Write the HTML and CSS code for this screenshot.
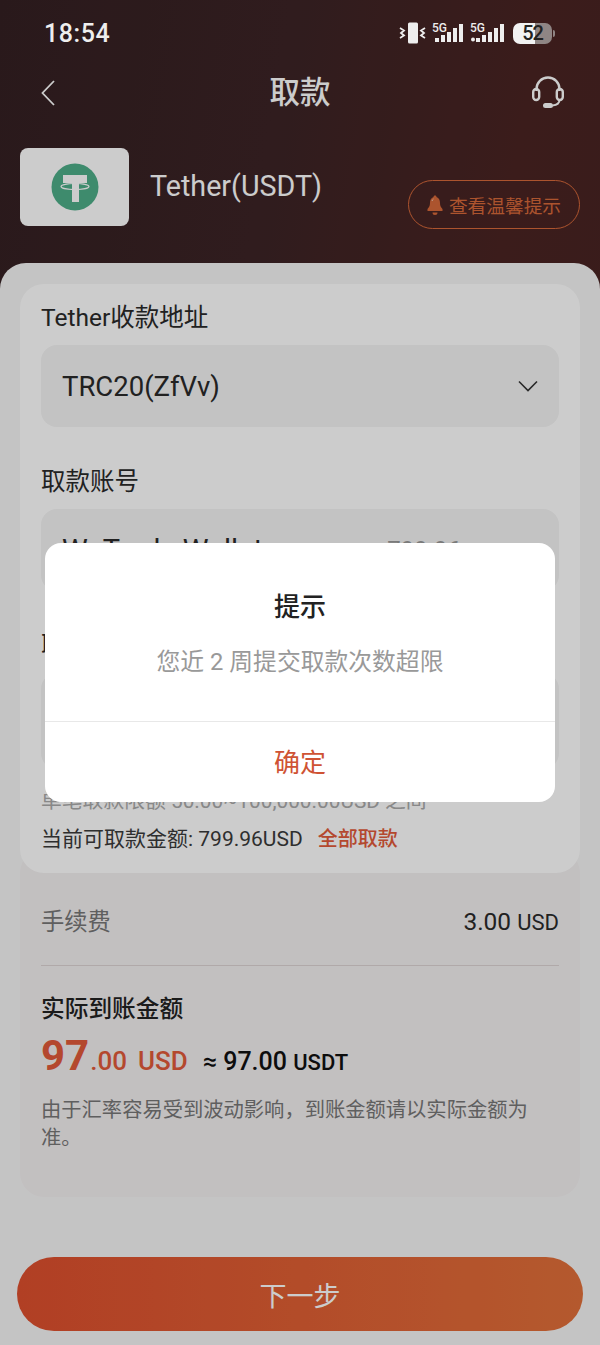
FILE: index.html
```html
<!DOCTYPE html>
<html lang="zh">
<head>
<meta charset="utf-8">
<title>取款</title>
<link rel="stylesheet" href="styles.css">
</head>
<body>
<div class="page">
  <div class="status">
    <span class="time">18:54</span>
    <div class="status-icons">
      <svg class="ic-vibrate" width="29" height="22" viewBox="0 0 29 22">
        <rect x="10" y="0.500" width="10" height="21" rx="1.500" fill="#eee"/>
        <path d="M2 6l4 2.500-3 2.500 3 2.500-4 2.500M27 6l-4 2.500 3 2.500-3 2.500 4 2.500" fill="none" stroke="#eee" stroke-width="1.800"/>
      </svg>
      <svg class="ic-signal" width="32" height="22" viewBox="0 0 32 22">
        <text x="0" y="9.500" class="five-g">5G</text>
        <rect x="3" y="16" width="4" height="4" fill="#eee"/>
        <rect x="9" y="13" width="4" height="7" fill="#eee"/>
        <rect x="15" y="10" width="4" height="10" fill="#eee"/>
        <rect x="21" y="6" width="4" height="14" fill="#eee"/>
        <rect x="27" y="2" width="4" height="18" fill="#eee"/>
      </svg>
      <svg class="ic-signal ic-signal-two" width="35" height="22" viewBox="0 0 35 22">
        <text x="0" y="9.500" class="five-g">5G</text>
        <circle cx="3" cy="17.500" r="2" fill="#eee"/>
        <rect x="6" y="16" width="4" height="4" fill="#eee"/>
        <rect x="12" y="13" width="4" height="7" fill="#eee"/>
        <rect x="18" y="10" width="4" height="10" fill="#eee"/>
        <rect x="24" y="6" width="4" height="14" fill="#eee"/>
        <rect x="30" y="2" width="4" height="18" fill="#eee"/>
      </svg>
      <div class="battery">
        <span class="battery-level">52</span>
      </div>
      <span class="battery-tip"></span>
    </div>
  </div>

  <div class="nav">
    <svg class="back" width="14" height="26" viewBox="0 0 14 26">
      <path d="M13 1L1.500 13 13 25" fill="none" stroke="#fff" stroke-width="1.800"/>
    </svg>
    <h1 class="nav-title">取款</h1>
    <svg class="headset" width="34" height="34" viewBox="0 0 34 34">
      <path d="M5.500 15V13a11.500 11.500 0 0 1 23 0v2" fill="none" stroke="#fff" stroke-width="2.400"/>
      <rect x="2.200" y="13" width="6" height="11" rx="3" fill="none" stroke="#fff" stroke-width="2.400"/>
      <rect x="25.800" y="13" width="6" height="11" rx="3" fill="none" stroke="#fff" stroke-width="2.400"/>
      <path d="M28.500 24c0 3-3 5-7 5.500" fill="none" stroke="#fff" stroke-width="2"/>
      <rect x="12" y="27" width="10" height="5" rx="2.500" fill="#fff"/>
    </svg>
  </div>

  <div class="coin">
    <div class="coin-tile">
      <svg width="48" height="48" viewBox="0 0 48 48">
        <circle cx="24" cy="24" r="23.500" fill="#4eae89"/>
        <path d="M12 12h24v8h-8v19h-7V20h-9z" fill="#fff"/>
        <ellipse cx="24" cy="23.500" rx="14" ry="3" fill="none" stroke="#fff" stroke-width="1.100"/>
      </svg>
    </div>
    <span class="coin-name">Tether(USDT)</span>
    <div class="tips">
      <svg class="bell" width="16" height="20" viewBox="0 0 16 20">
        <path d="M8 0.500c1 0 1.500 .7 1.500 1.500 2.500 1 3.500 3 3.500 6 0 3 1 4.500 2.500 6v2H0.500v-2C2 12.500 3 11 3 8c0-3 1-5 3.500-6C6.500 1.200 7 .5 8 .5zM5.500 17.500h5a2.500 2.500 0 0 1-5 0z" fill="#d8693a"/>
        <path d="M5 6c.3-1 .8-1.500 1.500-2" fill="none" stroke="#f5c9b0" stroke-width="1"/>
      </svg>
      <span>查看温馨提示</span>
    </div>
  </div>

  <div class="sheet">
    <div class="card-form">
      <div class="label">Tether收款地址</div>
      <div class="field">
        <span class="field-text">TRC20(ZfVv)</span>
        <svg class="chevron" width="20" height="12" viewBox="0 0 20 12">
          <path d="M1 1.500l9 9 9-9" fill="none" stroke="#333" stroke-width="1.600"/>
        </svg>
      </div>
      <div class="label label-next">取款账号</div>
      <div class="field">
        <span class="field-text field-wallet">WeTrade Wallet</span>
        <span class="field-side">799.96 <small>USD</small></span>
      </div>
      <div class="label label-next">取款金额</div>
      <div class="field field-tall">
        <span class="field-text">100.00</span>
      </div>
      <div class="hint">单笔取款限额 50.00~100,000.00USD 之间</div>
      <div class="avail">当前可取款金额: 799.96USD<a class="all">全部取款</a></div>
    </div>

    <div class="card-summary">
      <div class="fee">
        <span class="fee-label">手续费</span>
        <span class="fee-value">3.00 <small>USD</small></span>
      </div>
      <div class="rule"></div>
      <div class="net-title">实际到账金额</div>
      <div class="net">
        <span class="net-int">97</span><span class="net-dec">.00</span><span class="net-cur">USD</span>
        <span class="net-approx">≈ 97.00 <small>USDT</small></span>
      </div>
      <p class="note">由于汇率容易受到波动影响，到账金额请以实际金额为准。</p>
    </div>

    <button class="next">下一步</button>
  </div>

  <div class="overlay">
    <div class="dialog">
      <div class="dialog-body">
        <div class="dialog-title">提示</div>
        <div class="dialog-msg">您近 2 周提交取款次数超限</div>
      </div>
      <div class="dialog-ok">确定</div>
    </div>
  </div>
</div>
</body>
</html>
```

FILE: styles.css
```css
* { box-sizing: border-box; }
html, body { margin: 0; padding: 0; }
body {
  font-family: Roboto, "Noto Sans CJK SC", sans-serif;
  color: #222;
}
.page {
  position: relative;
  width: 600px;
  height: 1345px;
  overflow: hidden;
  background: linear-gradient(100deg, #342022 0%, #3c2326 35%, #4a2422 65%, #462223 100%);
}

/* status bar */
.status {
  position: relative;
  z-index: 30;
  height: 66px;
  padding: 0 45px 0 44px;
  display: flex;
  align-items: center;
  justify-content: space-between;
  color: #eee;
}
.time { font-size: 25px; font-weight: 500; letter-spacing: .6px; }
.status-icons { display: flex; align-items: center; }
.ic-vibrate { margin-right: 5px; }
.ic-signal-two { margin-left: 6px; }
.five-g { font: 500 12px Roboto, sans-serif; fill: #eee; }
.battery {
  width: 39px;
  height: 21px;
  margin-left: 8px;
  border-radius: 7px;
  background: linear-gradient(90deg, #f2f2f2 0 56%, #8f8584 56% 100%);
  display: flex;
  align-items: center;
  justify-content: center;
}
.battery-level { font-size: 20px; font-weight: 500; color: #222; line-height: 21px; letter-spacing: -1px; }
.battery-tip { width: 2px; height: 7px; margin-left: 1px; background: #8f8584; border-radius: 0 2px 2px 0; }

/* nav */
.nav {
  height: 54px;
  padding: 0 35px;
  display: grid;
  grid-template-columns: 1fr auto 1fr;
  align-items: center;
}
.back { margin-left: 6px; }
.nav-title { margin: 0; font-size: 30.500px; font-weight: 500; line-height: 54px; color: #fff; }
.headset { display: block; justify-self: end; }

/* coin */
.coin {
  margin-top: 28px;
  padding: 0 20px;
  height: 81px;
  display: flex;
  align-items: flex-start;
}
.coin-tile {
  width: 109px;
  height: 78px;
  background: #fff;
  border-radius: 8px;
  display: flex;
  align-items: center;
  justify-content: center;
}
.coin-name { margin-left: 21px; font-size: 28.700px; line-height: 76px; color: #fff; }
.tips {
  margin-left: auto;
  margin-top: 32px;
  width: 172px;
  height: 49px;
  border: 1px solid #d8693a;
  border-radius: 25px;
  display: flex;
  align-items: center;
  justify-content: center;
  gap: 6px;
  font-size: 18.700px;
  color: #d8693a;
}

/* sheet */
.sheet {
  margin-top: 34px;
  padding-top: 21px;
  height: 1082px;
  background: #f6f6f6;
  border-radius: 26px 26px 0 0;
}
.card-form {
  position: relative;
  z-index: 1;
  margin: 0 20px;
  height: 589px;
  padding: 17px 21px 0;
  background: #fff;
  border-radius: 24px;
}
.label { font-size: 24.500px; line-height: 34px; margin-bottom: 10px; color: #2a2a2a; }
.label-next { margin-top: 38px; }
.field {
  height: 82px;
  padding: 0 21px;
  background: #f4f4f4;
  border-radius: 16px;
  display: flex;
  align-items: center;
  justify-content: space-between;
}
.field-tall { height: 96px; }
.field-text { font-size: 27.500px; color: #2a2a2a; }
.field-wallet { font-size: 29px; }
.field-side { margin-right: 35px; font-size: 24px; color: #999; }
.field-side small { font-size: 19px; }
.hint { margin-top: 17px; font-size: 20.800px; line-height: 30px; color: #aaa; }
.avail { margin-top: 8px; font-size: 21px; line-height: 30px; color: #3a3a3a; }
.all { margin-left: 15px; font-size: 20px; color: #e25a3a; font-weight: 500; }

.card-summary {
  margin: -24px 20px 0;
  height: 348px;
  padding: 54px 21px 0;
  background: #f3f0f1;
  border-radius: 24px;
}
.fee { display: flex; justify-content: space-between; align-items: center; height: 36px; }
.fee-label { font-size: 23.300px; color: #777; padding-bottom: 2px; }
.fee-value { font-size: 24.500px; color: #2a2a2a; }
.fee-value small { font-size: 22px; }
.rule { margin-top: 26px; height: 1px; background: #dcd4d4; }
.net-title { margin-top: 26px; font-size: 23.700px; line-height: 34px; font-weight: 500; color: #222; }
.net { margin-top: 2px; height: 55px; display: flex; align-items: baseline; white-space: pre; font-weight: 500; color: #e25a3a; }
.net-int { font-size: 42px; font-weight: 700; line-height: 55px; }
.net-dec { margin-left: 1px; font-size: 26px; }
.net-cur { margin-left: 11px; font-size: 26px; }
.net-approx { margin-left: 15px; font-size: 25px; color: #111; }
.net-approx small { font-size: 22px; }
.note { margin: 13px 0 0; font-size: 20.300px; line-height: 28px; color: #777; }

.next {
  display: block;
  margin: 60px 17px 0;
  width: 566px;
  height: 74px;
  border: 0;
  border-radius: 37px;
  background: linear-gradient(90deg, #de4f2e 0%, #e2703a 100%);
  color: #fff;
  font: 27px Roboto, "Noto Sans CJK SC", sans-serif;
}

/* modal */
.overlay {
  position: absolute;
  inset: 0;
  z-index: 20;
  background: rgba(0, 0, 0, .2);
  display: flex;
  align-items: center;
  justify-content: center;
}
.dialog {
  width: 510px;
  height: 259px;
  background: #fff;
  border-radius: 16px;
  display: flex;
  flex-direction: column;
}
.dialog-body { height: 179px; padding-top: 46px; text-align: center; border-bottom: 1px solid #e8e8e8; }
.dialog-title { font-size: 26px; line-height: 36px; font-weight: 500; color: #222; }
.dialog-msg { margin-top: 22px; font-size: 23.800px; line-height: 30px; color: #999; }
.dialog-ok { flex: 1; padding-bottom: 3px; display: flex; align-items: center; justify-content: center; font-size: 26px; color: #cf5334; }
```
